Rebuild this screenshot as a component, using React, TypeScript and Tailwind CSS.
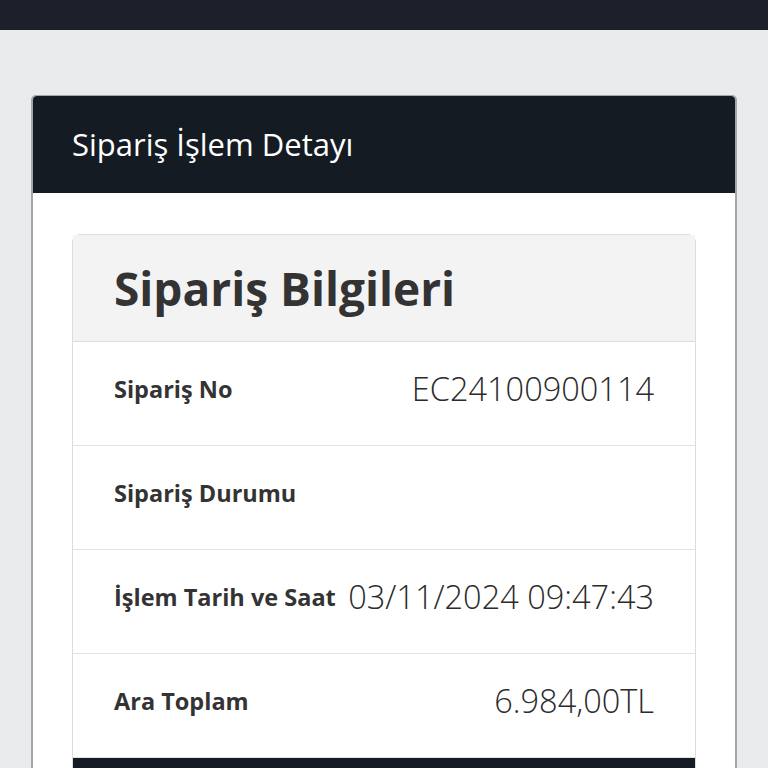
const rows = [
  { label: "Sipariş No", value: "EC24100900114" },
  { label: "Sipariş Durumu", value: "" },
  { label: "İşlem Tarih ve Saat", value: "03/11/2024 09:47:43" },
  { label: "Ara Toplam", value: "6.984,00TL" },
];

export default function App() {
  return (
    <div
      className="min-h-screen bg-[#e9ebec] overflow-hidden"
      style={{ fontFamily: '"Open Sans", "Noto Sans", sans-serif' }}
    >
      <div className="h-[30px] bg-[#1b202b]" />
      <div className="px-[31px] pt-[65px]">
        <div className="rounded-t-[5px] border-x-2 border-t border-[#a3a5a7] bg-white">
          <div className="flex h-[97px] items-center rounded-t-[4px] bg-[#151b22] px-[39px]">
            <h1 className="text-[31px] text-white">Sipariş İşlem Detayı</h1>
          </div>
          <div className="px-[39px] pt-[41px]">
            <div className="rounded-t-[8px] border border-[#dcdcdc]">
              <div className="flex h-[107px] items-center border-b border-[#dcdcdc] bg-[#f3f3f3] px-[41px]">
                <h2 className="text-[46px] font-bold leading-none text-[#333]">Sipariş Bilgileri</h2>
              </div>
              {rows.map((r) => (
                <div
                  key={r.label}
                  className="flex h-[104px] items-center justify-between whitespace-nowrap border-b border-[#e2e2e2] px-[41px] pb-[8px]"
                >
                  <span className="text-[23.5px] font-bold text-[#333]">{r.label}</span>
                  <span className="text-[32.5px] font-light text-[#2b2b2b]">{r.value}</span>
                </div>
              ))}
              <div className="h-[40px] bg-[#151b22]" />
            </div>
          </div>
        </div>
      </div>
    </div>
  );
}
